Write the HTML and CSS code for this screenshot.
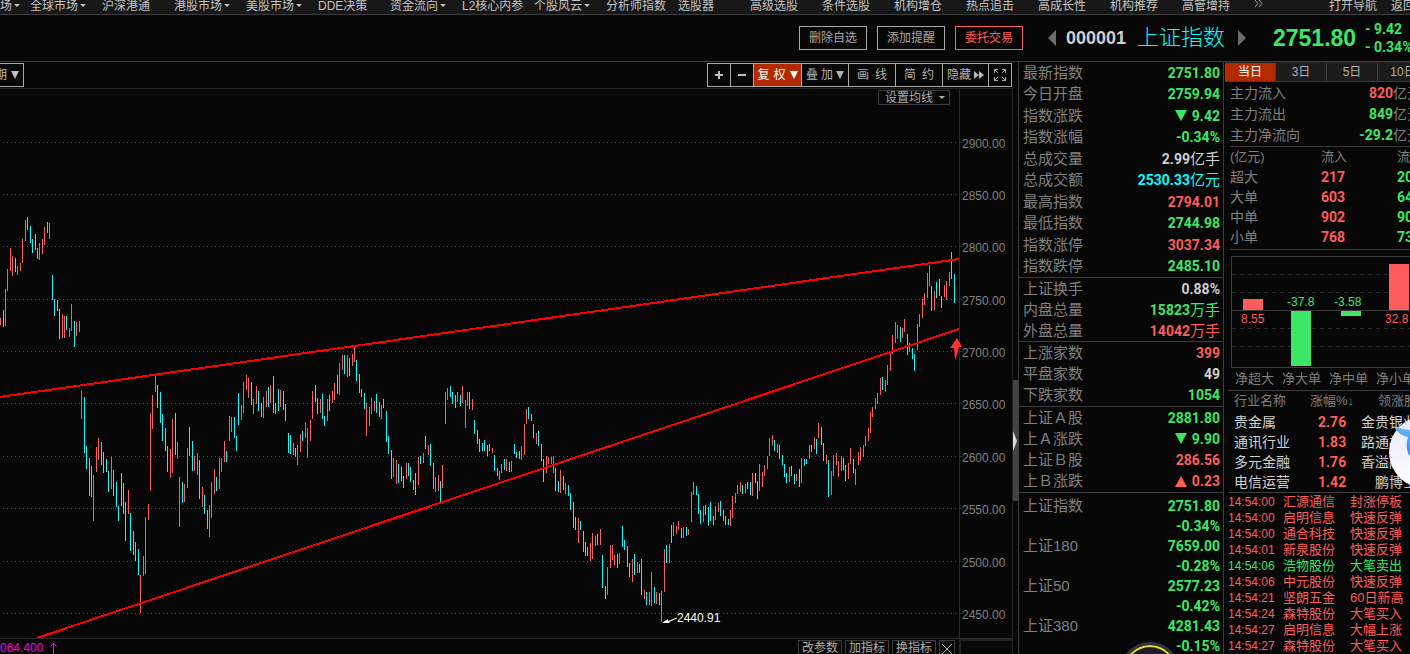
FILE: index.html
```html
<!DOCTYPE html>
<html lang="zh-CN">
<head>
<meta charset="utf-8">
<title>上证指数 000001</title>
<link rel="stylesheet" href="styles.css">
</head>
<body>
<nav class="menu">
  <a class="menu-first has-caret" href="#">场</a>
  <a class="has-caret" href="#">全球市场</a>
  <a href="#">沪深港通</a>
  <a class="has-caret" href="#">港股市场</a>
  <a class="has-caret" href="#">美股市场</a>
  <a href="#">DDE决策</a>
  <a class="has-caret" href="#">资金流向</a>
  <a href="#">L2核心内参</a>
  <a class="has-caret" href="#">个股风云</a>
  <a href="#">分析师指数</a>
  <a href="#">选股器</a>
  <a href="#">高级选股</a>
  <a href="#">条件选股</a>
  <a href="#">机构增仓</a>
  <a href="#">热点追击</a>
  <a href="#">高成长性</a>
  <a href="#">机构推荐</a>
  <a href="#">高管增持</a>
  <span class="menu-tail">
    <button class="more" aria-label="更多"><svg width="9" height="8" viewBox="0 0 9 8"><path d="M1 0l3 3.500-3 3.500M5 0l3 3.500-3 3.500" fill="none" stroke="#a8a8a8"/></svg></button>
    <a href="#">打开导航</a>
    <a href="#">返回</a>
  </span>
</nav>

<header class="head">
  <div class="actions">
    <button>删除自选</button>
    <button>添加提醒</button>
    <button class="trade">委托交易</button>
  </div>
  <div class="title">
    <button class="step" aria-label="上一个"><svg width="8" height="16" viewBox="0 0 8 16"><path d="M8 0v16L0 8z" fill="#6c6c6c"/></svg></button>
    <strong class="code">000001</strong>
    <h1>上证指数</h1>
    <button class="step" aria-label="下一个"><svg width="8" height="16" viewBox="0 0 8 16"><path d="M0 0v16l8-8z" fill="#6c6c6c"/></svg></button>
    <strong class="price">2751.80</strong>
    <div class="delta"><span>- 9.42</span><span>- 0.34%</span></div>
  </div>
</header>

<main class="main">
  <section class="chart">
    <div class="bar">
      <button class="period">期<i class="tri"></i></button>
      <div class="tools">
        <button class="sq" aria-label="放大"><svg width="8" height="8" viewBox="0 0 8 8"><path d="M4 0v8M0 4h8" stroke="#c0c0c0" stroke-width="2"/></svg></button>
        <button class="sq" aria-label="缩小"><svg width="8" height="8" viewBox="0 0 8 8"><path d="M0 4h8" stroke="#c0c0c0" stroke-width="2"/></svg></button>
        <button class="on"><span>复</span><span>权</span><i class="tri"></i></button>
        <button class="tight"><span>叠</span><span>加</span><i class="tri"></i></button>
        <button class="wide"><span>画</span><span>线</span></button>
        <button class="wide"><span>简</span><span>约</span></button>
        <button class="tight hide">隐藏<svg width="10" height="8" viewBox="0 0 10 8"><path d="M0 0v8l5-4zM5 0v8l5-4z" fill="#b8b8b8"/></svg></button>
        <button class="full" aria-label="全屏"><svg width="12" height="12" viewBox="0 0 12 12"><path d="M.5 4V.5H4M.5.500l3.500 3.500M8 .5h3.500V4M11.500.5L8 4M.5 8v3.500H4M.5 11.500L4 8M8 11.500h3.500V8M11.500 11.500L8 8" fill="none" stroke="#a8a8a8"/></svg></button>
      </div>
    </div>
    <div class="plot">
      <button class="ma">设置均线<i class="caret"></i></button>
      <svg class="kline" viewBox="0 89 1012 549" role="img" aria-label="上证指数日K线">
        <g transform="translate(.5 .5)">
          <path class="grid" d="M2.500 142H956M2.500 194H956M2.500 246H956M2.500 299H956M2.500 351H956M2.500 403H956M2.500 456H956M2.500 508H956M2.500 561H956M2.500 613H956"/>
          <path class="axis" d="M959 88V638M959 142h3M959 194h3M959 246h3M959 299h3M959 351h3M959 403h3M959 456h3M959 508h3M959 561h3M959 613h3"/>
        </g>
        <g class="candles" transform="translate(.5 0)">
          <path class="up" d="M0 318V325M5 289V326M7 269V291M10 248V271M12 256V276M17 266V275M20 263V271M22 239V263M25 220V241M39 243V260M42 239V254M44 227V245M49 223V239M62 314V338M64 316V338M69 328V337M71 304V331M76 322V336M79 321V332M81 391V419M93 475V521M96 447V472M98 438V460M111 457V489M128 490V514M140 575V613M143 556V576M145 517V574M148 504V520M150 413V491M152 395V429M155 376V392M170 449V478M172 419V473M177 442V459M179 477V527M184 484V502M187 448V488M194 456V471M197 453V475M202 487V507M209 505V537M211 482V518M214 469V494M219 458V489M221 458V472M224 441V462M229 416V441M231 417V432M241 405V420M243 382V413M246 375V390M248 378V398M253 399V414M256 386V404M263 397V418M266 391V407M270 385V403M280 390V407M293 443V455M297 445V465M300 434V452M305 422V438M307 428V458M310 420V441M312 391V419M320 399V413M327 399V421M332 391V403M334 383V400M339 363V395M342 355V370M347 355V377M352 354V366M354 347V362M366 403V436M369 407V426M371 398V414M374 401V411M381 405V419M393 458V477M396 460V484M406 463V479M418 457V485M423 453V463M428 445V455M435 477V492M438 475V491M442 465V488M445 392V424M447 388V400M457 392V402M462 386V403M465 400V428M467 392V406M472 399V410M492 448V453M499 471V480M501 464V473M506 459V471M511 461V472M521 446V460M524 424V455M526 409V424M536 433V444M546 456V473M548 457V464M551 457V464M553 456V473M560 470V493M565 483V494M578 518V543M590 543V561M592 533V559M595 536V546M600 529V545M607 567V595M610 545V568M612 545V560M614 555V565M619 553V564M632 559V582M637 562V573M644 590V599M649 592V605M651 572V606M656 592V604M661 591V622M664 549V592M669 544V563M673 522V536M676 526V534M678 521V530M683 527V538M688 529V535M691 492V522M693 482V495M703 506V522M715 506V520M718 503V512M730 510V526M732 496V518M735 493V503M737 485V494M740 482V492M745 484V493M752 473V496M759 464V491M762 472V487M764 465V476M767 456V469M769 438V456M772 435V446M777 444V453M789 467V482M796 474V481M801 458V483M809 445V459M814 437V449M818 423V438M826 455V464M831 471V495M833 455V476M836 453V465M838 461V477M841 456V471M848 463V479M850 448V464M855 469V485M858 452V465M860 447V461M863 445V457M865 436V446M868 428V441M870 412V433M872 407V417M875 398V409M877 393V404M880 378V395M885 380V392M887 365V385M890 351V371M892 335V354M895 322V343M897 325V339M902 328V338M904 319V332M909 343V352M917 324V350M919 314V327M922 299V318M924 293V305M927 273V298M929 265V286M934 291V310M944 285V297M946 281V300M949 272V286"/>
          <path class="down" d="M3 310V327M15 258V272M27 217V230M30 226V243M32 239V253M35 234V250M37 248V259M47 222V233M52 275V300M54 299V316M57 300V311M59 309V339M66 316V330M74 321V347M84 397V453M86 446V469M89 458V496M91 466V497M101 442V465M103 452V473M106 459V472M108 471V492M113 470V496M116 482V507M118 506V521M121 473V506M123 483V514M125 502V541M130 513V551M133 531V555M135 542V561M138 549V575M157 385V408M160 392V423M162 414V441M165 428V451M167 446V472M175 413V455M182 482V503M189 427V456M192 441V471M199 460V499M204 495V514M207 510V529M216 477V491M226 451V462M234 417V438M236 436V451M238 393V425M251 382V405M258 391V411M261 403V417M268 387V407M273 376V413M275 403V414M278 389V411M283 391V410M285 404V421M288 433V453M290 435V454M295 448V457M302 431V441M315 385V402M317 398V414M322 394V419M324 416V426M329 395V411M337 375V394M344 355V374M349 358V376M356 360V381M359 374V393M361 389V397M364 393V409M376 394V413M379 402V417M383 399V408M386 411V442M388 436V454M391 450V479M398 464V483M401 467V481M403 476V488M408 463V476M410 467V482M413 480V490M415 473V495M420 456V464M425 436V449M430 444V466M433 463V489M440 481V502M450 386V397M452 392V404M455 395V408M460 395V406M469 392V409M474 420V434M477 430V444M479 439V452M482 443V451M484 440V451M487 445V456M489 444V451M494 455V471M497 468V476M504 459V470M509 462V472M514 444V454M516 452V458M519 451V459M528 407V419M531 414V421M533 424V438M538 431V446M541 444V461M543 459V482M555 468V491M558 481V492M563 476V490M568 485V496M570 493V510M573 502V528M575 517V530M580 521V530M583 531V552M585 542V556M587 547V556M597 534V545M602 555V588M605 586V599M617 554V568M622 526V547M624 540V550M627 546V567M629 563V577M634 554V575M639 564V573M641 559V595M646 592V605M654 587V603M659 593V605M666 545V563M671 525V543M681 528V538M686 527V536M696 486V495M698 494V514M700 510V524M705 505V515M708 507V526M710 502V521M713 516V525M720 501V516M723 510V521M725 516V525M728 519V525M742 485V494M747 482V489M750 482V495M755 473V483M757 481V499M774 440V451M779 445V459M782 455V465M784 464V477M786 473V483M791 466V476M794 474V484M799 469V487M804 459V466M806 459V464M811 445V452M816 439V454M821 427V445M823 443V461M828 460V497M843 458V470M845 465V481M853 459V473M882 377V390M900 327V342M907 334V355M912 348V359M914 354V371M931 286V311M936 282V298M939 279V296M941 296V308M951 252V279M954 274V303"/>
        </g>
        <path class="trend" d="M0 397L959 259M37 638L959 329"/>
        <path d="M957 338l5 9h-3l-1 5-3 8-1-12h-4z" fill="#ff3030"/>
        <path d="M662 623l6-4v2l9-3.500v1L669 622l1 1z" fill="#fff"/>
        <text class="low" x="677" y="622">2440.91</text>
        <g class="ticks">
          <text x="962" y="148">2900.00</text><text x="962" y="200">2850.00</text><text x="962" y="252">2800.00</text><text x="962" y="305">2750.00</text><text x="962" y="357">2700.00</text><text x="962" y="409">2650.00</text><text x="962" y="462">2600.00</text><text x="962" y="514">2550.00</text><text x="962" y="567">2500.00</text><text x="962" y="619">2450.00</text>
        </g>
      </svg>
    </div>
    <footer class="foot">
      <span class="vol">064.400 <svg width="7" height="12" viewBox="0 0 7 12"><path d="M3.500 12V1M.5 4.500l3-3.500 3 3.500" fill="none" stroke="#f0f"/></svg></span>
      <div class="foot-buttons">
        <button>改参数</button>
        <button>加指标</button>
        <button>换指标</button>
        <button class="close" aria-label="关闭"><svg width="10" height="10" viewBox="0 0 10 10"><path d="M0 0l10 10M10 0L0 10" stroke="#b0b0b0"/></svg></button>
      </div>
      <div class="foot-end"></div>
    </footer>
  </section>

  <div class="splitter"><div class="grip"><svg width="4" height="20" viewBox="0 0 4 20"><path d="M0 0l4 10-4 10z" fill="#ddd"/></svg></div></div>

  <section class="quote">
    <dl class="group ten">
      <div><dt>最新指数</dt><dd class="g">2751.80</dd></div>
      <div><dt>今日开盘</dt><dd class="g">2759.94</dd></div>
      <div><dt>指数涨跌</dt><dd class="g"><i class="mark dn"></i>9.42</dd></div>
      <div><dt>指数涨幅</dt><dd class="g">-0.34%</dd></div>
      <div><dt>总成交量</dt><dd class="w">2.99<span>亿手</span></dd></div>
      <div><dt>总成交额</dt><dd class="c">2530.33<span>亿元</span></dd></div>
      <div><dt>最高指数</dt><dd class="r">2794.01</dd></div>
      <div><dt>最低指数</dt><dd class="g">2744.98</dd></div>
      <div><dt>指数涨停</dt><dd class="r">3037.34</dd></div>
      <div><dt>指数跌停</dt><dd class="g">2485.10</dd></div>
    </dl>
    <dl class="group volume">
      <div><dt>上证换手</dt><dd class="w">0.88%</dd></div>
      <div><dt>内盘总量</dt><dd class="g">15823<span>万手</span></dd></div>
      <div><dt>外盘总量</dt><dd class="r">14042<span>万手</span></dd></div>
    </dl>
    <dl class="group three">
      <div><dt>上涨家数</dt><dd class="r">399</dd></div>
      <div><dt>平盘家数</dt><dd class="w">49</dd></div>
      <div><dt>下跌家数</dt><dd class="g">1054</dd></div>
    </dl>
    <dl class="group four">
      <div><dt>上证Ａ股</dt><dd class="g">2881.80</dd></div>
      <div><dt>上Ａ涨跌</dt><dd class="g"><i class="mark dn"></i>9.90</dd></div>
      <div><dt>上证Ｂ股</dt><dd class="r">286.56</dd></div>
      <div><dt>上Ｂ涨跌</dt><dd class="r"><i class="mark up-mark"></i>0.23</dd></div>
    </dl>
    <dl class="indices">
      <div><dt>上证指数</dt><dd>2751.80<br>-0.34%</dd></div>
      <div><dt>上证180</dt><dd>7659.00<br>-0.28%</dd></div>
      <div><dt>上证50</dt><dd>2577.23<br>-0.42%</dd></div>
      <div><dt>上证380</dt><dd>4281.43<br>-0.15%</dd></div>
    </dl>
  </section>

  <section class="side">
    <div class="tabs">
      <button class="on">当日</button><button>3日</button><button>5日</button><button>10日</button>
    </div>
    <dl class="flow">
      <div><dt>主力流入</dt><dd><b class="r">820</b>亿元</dd></div>
      <div><dt>主力流出</dt><dd><b class="g">849</b>亿元</dd></div>
      <div><dt>主力净流向</dt><dd><b class="g">-29.2</b>亿元</dd></div>
    </dl>
    <div class="orders-wrap">
      <table class="orders">
        <thead><tr><th class="o-name">(亿元)</th><th class="o-in">流入</th><th class="o-out">流出</th></tr></thead>
        <tbody>
          <tr><td>超大</td><td class="r">217</td><td class="g">208</td></tr>
          <tr><td>大单</td><td class="r">603</td><td class="g">641</td></tr>
          <tr><td>中单</td><td class="r">902</td><td class="g">906</td></tr>
          <tr><td>小单</td><td class="r">768</td><td class="g">735</td></tr>
        </tbody>
      </table>
    </div>
    <div class="net">
      <svg width="200" height="112" viewBox="1231 256 200 112" role="img" aria-label="净流入">
        <path class="dash" d="M1232 274.500h198M1232 292.500h198M1232 328.500h198M1232 346.500h198"/>
        <path class="frame" d="M1231.500 256.500h199v111h-199zM1231 310.500h199"/>
        <path d="M1243 299h20v11h-20zM1389 264h20v46h-20z" fill="#ff5c5c"/>
        <path d="M1291 311h20v55h-20zM1341 311h20v5h-20z" fill="#3ce666"/>
        <text x="1241" y="323" fill="#ff5c5c">8.55</text>
        <text x="1287" y="306" fill="#3ce666">-37.8</text>
        <text x="1334" y="306" fill="#3ce666">-3.58</text>
        <text x="1385" y="323" fill="#ff5c5c">32.8</text>
      </svg>
      <div class="net-names"><span>净超大</span><span>净大单</span><span>净中单</span><span>净小单</span></div>
    </div>
    <table class="trades">
      <thead><tr><th class="t-name">行业名称</th><th class="t-pct">涨幅%↓</th><th class="t-lead">领涨股</th></tr></thead>
      <tbody>
        <tr><td>贵金属</td><td class="r">2.76</td><td>金贵银业</td></tr>
        <tr><td>通讯行业</td><td class="r">1.83</td><td>路通视信</td></tr>
        <tr><td>多元金融</td><td class="r">1.76</td><td>香溢融通</td></tr>
        <tr><td>电信运营</td><td class="r">1.42</td><td>鹏博士</td></tr>
      </tbody>
    </table>
    <ul class="ticker">
      <li><time>14:54:00</time><span>汇源通信</span><span>封涨停板</span></li>
      <li><time>14:54:00</time><span>启明信息</span><span>快速反弹</span></li>
      <li><time>14:54:00</time><span>通合科技</span><span>快速反弹</span></li>
      <li><time>14:54:01</time><span>新泉股份</span><span>快速反弹</span></li>
      <li class="sell"><time>14:54:06</time><span>浩物股份</span><span>大笔卖出</span></li>
      <li><time>14:54:06</time><span>中元股份</span><span>快速反弹</span></li>
      <li><time>14:54:21</time><span>坚朗五金</span><span>60日新高</span></li>
      <li><time>14:54:24</time><span>森特股份</span><span>大笔买入</span></li>
      <li><time>14:54:27</time><span>启明信息</span><span>大幅上涨</span></li>
      <li><time>14:54:27</time><span>森特股份</span><span>大笔买入</span></li>
    </ul>
  </section>
</main>

<div class="bubble">
  <svg width="72" height="72" viewBox="0 0 72 72">
    <defs>
      <linearGradient id="pearl" x1="0" y1="0" x2="0" y2="1"><stop offset="0" stop-color="#e4e9ff"/><stop offset="1" stop-color="#fff"/></linearGradient>
      <linearGradient id="wing" x1="0" y1="0" x2="0" y2="1"><stop offset="0" stop-color="#62b6f6"/><stop offset="1" stop-color="#3f7fee"/></linearGradient>
    </defs>
    <circle cx="36" cy="36" r="36" fill="url(#pearl)"/>
    <path d="M5 11c5 1 11 3 17 3l18 3 8 13-16 16-12-7c-3-6-3-12-1-18-6-1-11-5-14-10z" fill="url(#wing)"/>
  </svg>
</div>
<div class="dial"></div>
</body>
</html>
```
FILE: styles.css
```css
* { box-sizing: border-box; }
html, body { height: 100%; }
body {
  margin: 0;
  overflow: hidden;
  position: relative;
  background: #070707;
  color: #c0c0c0;
  font: 12px/16px "Liberation Sans", "Noto Sans CJK SC", sans-serif;
}
button {
  margin: 0;
  padding: 0;
  border: 0;
  background: none;
  color: inherit;
  font: inherit;
  white-space: nowrap;
}
a { color: inherit; text-decoration: none; }
dl, dd, dt, ul, h1 { margin: 0; padding: 0; }
svg { display: block; }
i { font-style: normal; }
.r { color: #ff5c5c; }
.g { color: #3ce666; }
.w { color: #d0d0d0; }
.c { color: #00ffff; }

/* top menu */
.menu {
  display: flex;
  height: 15px;
  overflow: hidden;
  background: #171717;
  border-bottom: 1px solid #3c3c3c;
  color: #c4c4c4;
  line-height: 12px;
}
.menu > a { flex: 0 0 72px; white-space: nowrap; }
.menu > .menu-first { flex-basis: 30px; }
.has-caret::after {
  content: "";
  display: inline-block;
  margin-left: 2px;
  vertical-align: 3px;
  border: 3px solid transparent;
  border-top-color: #c4c4c4;
  border-bottom: 0;
}
.menu-tail { display: flex; margin-left: auto; flex: none; width: 156px; white-space: nowrap; }
.menu-tail .more { flex: 0 0 75px; height: 8px; }
.menu-tail .more svg { margin-right: auto; }
.menu-tail a { flex: 0 0 62px; }

/* heading row */
.head {
  display: flex;
  justify-content: flex-end;
  align-items: center;
  height: 47px;
  border-bottom: 1px solid #3c3c3c;
}
.actions { display: flex; gap: 10px; margin-right: 25px; }
.actions button {
  width: 68px;
  height: 24px;
  border: 1px solid #a8a8a8;
  color: #a8a8a8;
}
.actions .trade { border-color: #ff5c5c; color: #ff5c5c; }
.title {
  display: grid;
  grid-template-columns: 18px 71px 101px 35px 92px 45px;
  align-items: center;
}
.code { font-size: 18px; color: #d0d0d0; }
.title h1 { color: #00ffff; font-size: 22px; line-height: 28px; font-weight: 300; }
.price { color: #3ce666; font-size: 23px; }
.delta {
  display: grid;
  line-height: 18px;
  color: #3ce666;
  font-family: Roboto, sans-serif;
  font-size: 14px;
  font-weight: 700;
  white-space: nowrap;
}

.main { display: grid; grid-template-columns: 1fr 5px 205px 187px; }

/* chart panel */
.chart { min-width: 0; }
.bar {
  display: flex;
  justify-content: space-between;
  align-items: center;
  height: 27px;
  padding-right: 1px;
  border-bottom: 1px solid #222;
}
.period {
  display: flex;
  align-items: center;
  gap: 4px;
  height: 24px;
  padding: 0 4px 0 0;
  border: 1px solid #a8a8a8;
  border-left: 0;
  width: 24px;
  justify-content: flex-end;
}
.tri { border: 4px solid transparent; border-top: 8px solid currentColor; border-bottom: 0; }
.caret { border: 3px solid transparent; border-top-color: currentColor; border-bottom: 0; }
.tools { display: flex; border: 1px solid #a8a8a8; color: #b0b0b0; }
.tools button {
  display: flex;
  align-items: center;
  justify-content: center;
  gap: 4px;
  width: 47px;
  height: 22px;
  border-right: 1px solid #a8a8a8;
}
.tools .sq { width: 23px; }
.tools .full { width: 22px; border-right: 0; }
.tools .on { width: 48px; background: #b22a00; color: #fff; }
.tools .tight { gap: 3px; }
.tools .hide { width: 46px; }
.tools .wide { gap: 6px; }
.plot { position: relative; border-right: 1px solid #222; }
.kline { width: 100%; height: auto; }
.ma {
  position: absolute;
  top: 1px;
  right: 62px;
  display: flex;
  align-items: center;
  justify-content: flex-end;
  gap: 6px;
  width: 72px;
  height: 15px;
  padding-right: 4px;
  border: 1px solid #3c3c3c;
  color: #b0b0b0;
}
.grid { fill: none; stroke: #505050; stroke-dasharray: 1 3; shape-rendering: crispEdges; }
.axis { fill: none; stroke: #2c2c2c; shape-rendering: crispEdges; }
.candles path { fill: none; shape-rendering: crispEdges; }
.candles .up { stroke: #ff5c5c; }
.candles .down { stroke: #00ffff; }
.trend { fill: none; stroke: #ff0000; stroke-width: 2; shape-rendering: crispEdges; }
.ticks text { fill: #808080; font-size: 12px; }
.low { fill: #fff; font-size: 12px; }
.foot { display: flex; border-top: 1px solid #2c2c2c; }
.vol { display: flex; gap: 7px; flex: 1; color: #f000f0; line-height: 18px; align-items: center; }
.foot-buttons { display: flex; gap: 3px; padding: 1px 4px 0 0; }
.foot-buttons button { width: 44px; height: 17px; border: 1px solid #3c3c3c; line-height: 15px; color: #b0b0b0; }
.foot-buttons .close { display: grid; place-items: center; width: 16px; }
.foot-end { width: 54px; border: 2px solid #222; border-right-width: 1px; }

/* splitter */
.splitter { padding-top: 318px; }
.grip { display: flex; align-items: center; height: 121px; background: #444; }

/* quote column */
.quote { border-left: 1px solid #3c3c3c; color: #808080; }
.group { display: grid; grid-auto-rows: 1fr; border-bottom: 1px solid #3c3c3c; }
.ten { height: 216px; }
.volume { height: 64px; }
.three { height: 65px; }
.four { height: 86px; }
.group > div, .indices > div { display: flex; justify-content: space-between; padding: 0 3px 0 4px; }
.group > div { align-items: center; }
.quote dt { font-size: 15px; line-height: 20px; }
.quote dd {
  display: flex;
  align-items: center;
  text-align: right;
  font: 700 14px/20px Roboto, "Noto Sans CJK SC", sans-serif;
}
.quote dd span { font-size: 15px; font-weight: 400; }
.mark { margin-right: 5px; border: 6px solid transparent; }
.dn { border-top: 11px solid #3ce666; border-bottom: 0; }
.up-mark { border-bottom: 11px solid #ff5c5c; border-top: 0; }
.indices { padding-top: 3px; }
.indices dd { display: block; color: #3ce666; }

/* right column */
.side { min-width: 0; overflow: hidden; border-left: 1px solid #3c3c3c; padding-left: 1px; color: #808080; }
.tabs { display: flex; height: 20px; border-top: 1px solid #222; border-bottom: 1px solid #3c3c3c; }
.tabs button { flex: 0 0 51px; background: #1c1c1c; border-right: 1px solid #3c3c3c; color: #b0b0b0; line-height: 17px; }
.tabs .on { background: #b22a00; color: #fff; }
.flow { margin-left: 5px; padding: 1px 0 0; border-bottom: 1px solid #3c3c3c; font-size: 14px; line-height: 21px; }
.flow > div { display: grid; grid-template-columns: 80px 1fr; }
.flow dd { display: flex; white-space: nowrap; }
.flow b { flex: 0 0 83px; text-align: right; font-family: Roboto, sans-serif; }
table { border-collapse: collapse; table-layout: fixed; }
th, td { padding: 0; font-weight: 400; text-align: left; white-space: nowrap; }
.orders-wrap { margin-left: 5px; padding-bottom: 2px; border-bottom: 1px solid #3c3c3c; }
.orders { width: 220px; font-size: 14px; }
.orders th { height: 20px; font-size: 13px; }
.orders td { height: 20px; line-height: 20px; }
.o-name { width: 91px; }
.o-in { width: 76px; }
.orders .r, .orders .g, .trades .r { font-family: Roboto, sans-serif; font-weight: 700; }
.net { padding-top: 6px; }
.net svg { margin-left: 6px; }
.net text { font-size: 12px; }
.dash { fill: none; stroke: #2c2c2c; stroke-dasharray: 4 4; }
.frame { fill: none; stroke: #3c3c3c; }
.net-names { display: grid; grid-template-columns: repeat(4, 47px); padding-left: 10px; font-size: 13px; line-height: 22px; white-space: nowrap; }
.trades { width: 189px; margin-left: 3px; border-top: 1px solid #3c3c3c; border-bottom: 1px solid #3c3c3c; font-size: 14px; color: #d0d0d0; }
.trades th { height: 21px; font-size: 13px; color: #808080; }
.trades td { height: 20px; line-height: 20px; }
.trades th:first-child, .trades td:first-child { padding-left: 6px; }
.t-name { width: 82px; }
.t-pct { width: 50px; }
.trades td.r { padding-left: 8px; }
.trades th:last-child, .trades td:last-child { text-align: right; }
.ticker { list-style: none; margin-left: 3px; padding-top: 1px; color: #ff5c5c; font-size: 13px; line-height: 16px; }
.ticker li { display: grid; grid-template-columns: 55px 67px 1fr; white-space: nowrap; }
.ticker time { font-size: 12px; }
.ticker .sell { color: #3ce666; }

/* floating widgets */
.bubble { position: absolute; top: 416px; right: -51px; }
.dial {
  position: absolute;
  right: 230px;
  bottom: -48px;
  width: 60px;
  height: 60px;
  border: 3px solid #33343c;
  border-radius: 50%;
  background: #1c1c22;
  box-shadow: inset 0 0 0 2px #f0e020;
}
```
